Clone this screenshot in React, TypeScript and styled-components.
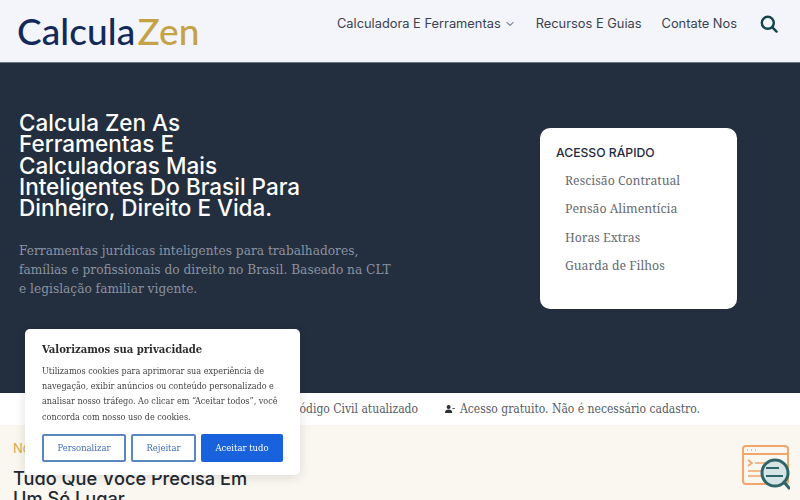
import React from "react";
import styled, { createGlobalStyle } from "styled-components";
import { ChevronDown } from "lucide-react";

const Global = createGlobalStyle`
  html, body { margin: 0; padding: 0; width: 800px; height: 500px; overflow: hidden; background: #faf7f1; }
  * { box-sizing: border-box; }
`;
const serifNarrow = `"DejaVu Serif Condensed", "DejaVu Serif", serif`;
const Page = styled.div`
  width: 800px;
  height: 500px;
  overflow: hidden;
  display: flex;
  flex-direction: column;
`;
const Header = styled.header`
  height: 63px;
  flex: none;
  background: #f3f5fa;
  border-bottom: 1px solid #6f7785;
  display: flex;
  align-items: center;
  justify-content: space-between;
  padding: 0 22px 2px 17px;
`;
const Logo = styled.div`
  font-family: "Lato", sans-serif;
  font-size: 37px;
  font-weight: 500;
  letter-spacing: 0.1px;
  color: #12295a;
  line-height: 1;
  display: flex;
`;
const LogoAccent = styled.span`
  color: #c4a347;
  margin-left: 2px;
`;
const Nav = styled.nav`
  display: flex;
  align-items: center;
  gap: 20px;
  margin-bottom: 13px;
  font-family: "Inter", sans-serif;
  font-size: 12.85px;
  color: #3a4250;
`;
const NavItem = styled.span`
  display: flex;
  align-items: center;
  gap: 3px;
  white-space: nowrap;
`;
const SearchBtn = styled.span`
  display: flex;
  margin-left: 3px;
  color: #14424f;
`;
const Hero = styled.section`
  height: 330px;
  flex: none;
  background: #232e3f;
  display: flex;
  justify-content: space-between;
  padding: 49px 63px 0 19px;
`;
const HeroText = styled.div`
  width: 390px;
`;
const Title = styled.h1`
  margin: 0;
  font-family: "Inter", sans-serif;
  font-size: 22.5px;
  font-weight: 500;
  line-height: 21.3px;
  color: #fff;
`;
const Lead = styled.p`
  margin: 24px 0 0;
  font-family: "DejaVu Serif", serif;
  font-size: 12.2px;
  line-height: 19px;
  color: #8b93a1;
  white-space: nowrap;
`;
const Card = styled.aside`
  width: 197px;
  height: 181px;
  margin-top: 16px;
  background: #fff;
  border-radius: 10px;
  padding: 16px 16px;
`;
const CardTitle = styled.h2`
  margin: 0 0 6px;
  font-family: "Inter", sans-serif;
  font-size: 12.2px;
  font-weight: 500;
  line-height: 17px;
  color: #232842;
`;
const CardLink = styled.div`
  margin-left: 9px;
  font-family: "Noto Serif", "DejaVu Serif", serif;
  font-size: 12.3px;
  line-height: 28.4px;
  color: #666b72;
  white-space: nowrap;
`;
const Strip = styled.div`
  height: 32px;
  flex: none;
  background: #fff;
  display: flex;
  align-items: center;
  justify-content: flex-end;
  padding: 0 100px 0 0;
  gap: 27px;
  font-family: ${serifNarrow};
  font-size: 12px;
  color: #555a62;
  white-space: nowrap;
`;
const StripItem = styled.span`
  display: flex;
  align-items: center;
  gap: 5px;
`;
const Lower = styled.section`
  flex: 1;
  background: #faf7f1;
  display: flex;
  justify-content: space-between;
  padding: 16px 10px 0 13px;
`;
const Eyebrow = styled.div`
  font-family: "Inter", sans-serif;
  font-size: 13px;
  line-height: 14px;
  color: #d8a94f;
`;
const SectionTitle = styled.h2`
  margin: 13px 0 0;
  width: 250px;
  font-family: "Inter", sans-serif;
  font-size: 18.2px;
  font-weight: 500;
  line-height: 20px;
  color: #222933;
`;
const Cookie = styled.div`
  position: fixed;
  left: 25px;
  top: 329px;
  width: 275px;
  height: 146px;
  background: #fff;
  border-radius: 5px;
  box-shadow: 0 2px 12px rgba(0, 0, 0, 0.12);
  padding: 13px 17px;
  font-family: ${serifNarrow};
`;
const CookieTitle = styled.div`
  font-size: 11.2px;
  font-weight: 700;
  line-height: 15px;
  color: #2c2c2c;
  white-space: nowrap;
`;
const CookieBody = styled.p`
  margin: 7px 0 9px;
  font-size: 9px;
  line-height: 15.2px;
  color: #444;
  white-space: nowrap;
`;
const Buttons = styled.div`
  display: flex;
  gap: 5px;
`;
const Btn = styled.button<{ $w: number; $solid?: boolean }>`
  width: ${p => p.$w}px;
  height: 28px;
  padding: 0;
  border-radius: 2px;
  border: 2px solid ${p => (p.$solid ? "#1863dc" : "#5a87c4")};
  background: ${p => (p.$solid ? "#1863dc" : "#fff")};
  color: ${p => (p.$solid ? "#fff" : "#3f6fb5")};
  font-family: ${serifNarrow};
  font-size: 9.4px;
`;

export default function App() {
  return (
    <Page>
      <Global />
      <Header>
        <Logo>Calcula<LogoAccent>Zen</LogoAccent></Logo>
        <Nav>
          <NavItem>Calculadora E Ferramentas <ChevronDown size={12} /></NavItem>
          <NavItem>Recursos E Guias</NavItem>
          <NavItem>Contate Nos</NavItem>
          <SearchBtn>
            <svg width="18" height="18" viewBox="0 0 18 18" fill="none" stroke="currentColor" strokeWidth="2.4" strokeLinecap="round">
              <circle cx="7.8" cy="7.8" r="6" />
              <path d="M12.4 12.4 16.6 16.6" />
            </svg>
          </SearchBtn>
        </Nav>
      </Header>
      <Hero>
        <HeroText>
          <Title>Calcula Zen As<br />Ferramentas E<br />Calculadoras Mais<br />Inteligentes Do Brasil Para<br />Dinheiro, Direito E Vida.</Title>
          <Lead>Ferramentas jurídicas inteligentes para trabalhadores,<br />famílias e profissionais do direito no Brasil. Baseado na CLT<br />e legislação familiar vigente.</Lead>
        </HeroText>
        <Card>
          <CardTitle>ACESSO RÁPIDO</CardTitle>
          <CardLink>Rescisão Contratual</CardLink>
          <CardLink>Pensão Alimentícia</CardLink>
          <CardLink>Horas Extras</CardLink>
          <CardLink>Guarda de Filhos</CardLink>
        </Card>
      </Hero>
      <Strip>
        <StripItem>Baseado na CLT e Código Civil atualizado</StripItem>
        <StripItem>
          <svg width="10" height="8" viewBox="0 0 10 8" fill="#2b2f36">
            <circle cx="3.6" cy="2" r="2" />
            <path d="M0 8c0-2.4 1.4-3.4 3.6-3.4S7.2 5.6 7.2 8z" />
            <path d="M7.4 3.2h2.4v.9H7.4z" />
          </svg>
          Acesso gratuito. Não é necessário cadastro.
        </StripItem>
      </Strip>
      <Lower>
        <div>
          <Eyebrow>Nossas Ferramentas</Eyebrow>
          <SectionTitle>Tudo Que Você Precisa Em Um Só Lugar</SectionTitle>
        </div>
        <svg width="48" height="46" viewBox="0 0 48 46" fill="none" style={{ marginTop: 4 }}>
          <rect x="1" y="1" width="45" height="38" rx="3" stroke="#f2a66b" strokeWidth="2" />
          <path d="M1 9h45" stroke="#f2a66b" strokeWidth="2" />
          <path d="M5 5h1M9 5h1M13 5h1" stroke="#f2a66b" strokeWidth="1.5" />
          <path d="M6 15l4 3-4 3M6 26h16M6 31h14M13 18h10" stroke="#f2a66b" strokeWidth="1.6" />
          <circle cx="33" cy="28" r="13" fill="#d5e5e6" stroke="#2f6468" strokeWidth="3" />
          <path d="M24 23h13M24 31h17" stroke="#2f6468" strokeWidth="2" />
          <path d="M42 37l5 6" stroke="#2f6468" strokeWidth="3" strokeLinecap="round" />
        </svg>
      </Lower>
      <Cookie>
        <CookieTitle>Valorizamos sua privacidade</CookieTitle>
        <CookieBody>
          Utilizamos cookies para aprimorar sua experiência de<br />
          navegação, exibir anúncios ou conteúdo personalizado e<br />
          analisar nosso tráfego. Ao clicar em “Aceitar todos”, você<br />
          concorda com nosso uso de cookies.
        </CookieBody>
        <Buttons>
          <Btn $w={84}>Personalizar</Btn>
          <Btn $w={65}>Rejeitar</Btn>
          <Btn $w={82} $solid>Aceitar tudo</Btn>
        </Buttons>
      </Cookie>
    </Page>
  );
}
